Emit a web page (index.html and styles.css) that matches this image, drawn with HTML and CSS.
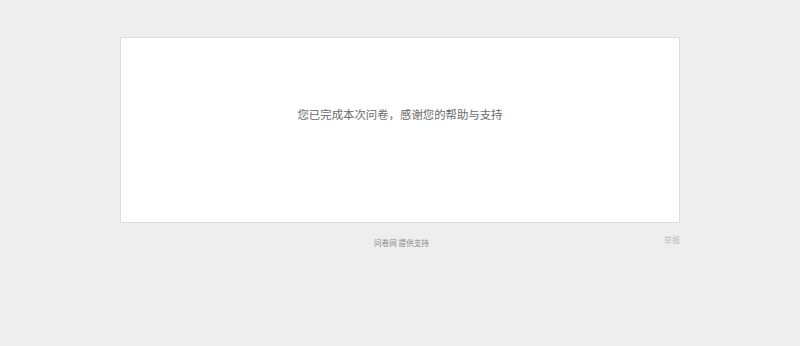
FILE: index.html
```html
<!doctype html>
<html>
  <head>
    <meta charset="utf-8" />
    <title>问卷网</title>
    <link rel="stylesheet" href="styles.css">
  </head>
  <body>
    <div class="wrapper">
      <div class="card">
        <p class="finish-text">您已完成本次问卷，感谢您的帮助与支持</p>
      </div>
      <div class="footer">
        <span class="spacer"></span>
        <div class="support">
          <a href="#">问卷网</a> <span>提供支持</span>
        </div>
        <a href="#" class="report">举报</a>
      </div>
    </div>
  </body>
</html>
```

FILE: styles.css
```css
html,
body {
  margin: 0;
  padding: 0;
}
body {
  background-color: #eeeeee;
  font-family: "Noto Sans CJK SC", "Liberation Sans", sans-serif;
  color: #666;
}
.wrapper {
  width: 560px;
  margin: 37px auto 0;
}
.card {
  box-sizing: border-box;
  height: 186px;
  padding-top: 67px;
  background-color: #fff;
  border: 1px solid #dedede;
  text-align: center;
}
.finish-text {
  margin: 0;
  font-size: 11.4px;
  line-height: 18px;
  color: #6a6a6a;
}
.footer {
  display: grid;
  grid-template-columns: 1fr auto 1fr;
  align-items: start;
}
.support {
  margin-top: 15px;
  padding-left: 3px;
  font-size: 7.6px;
  line-height: 10px;
  color: #888;
}
.support a {
  color: #888;
  text-decoration: none;
}
.report {
  justify-self: end;
  margin-top: 12px;
  font-size: 8px;
  line-height: 10px;
  color: #bbb;
  text-decoration: none;
}
```
